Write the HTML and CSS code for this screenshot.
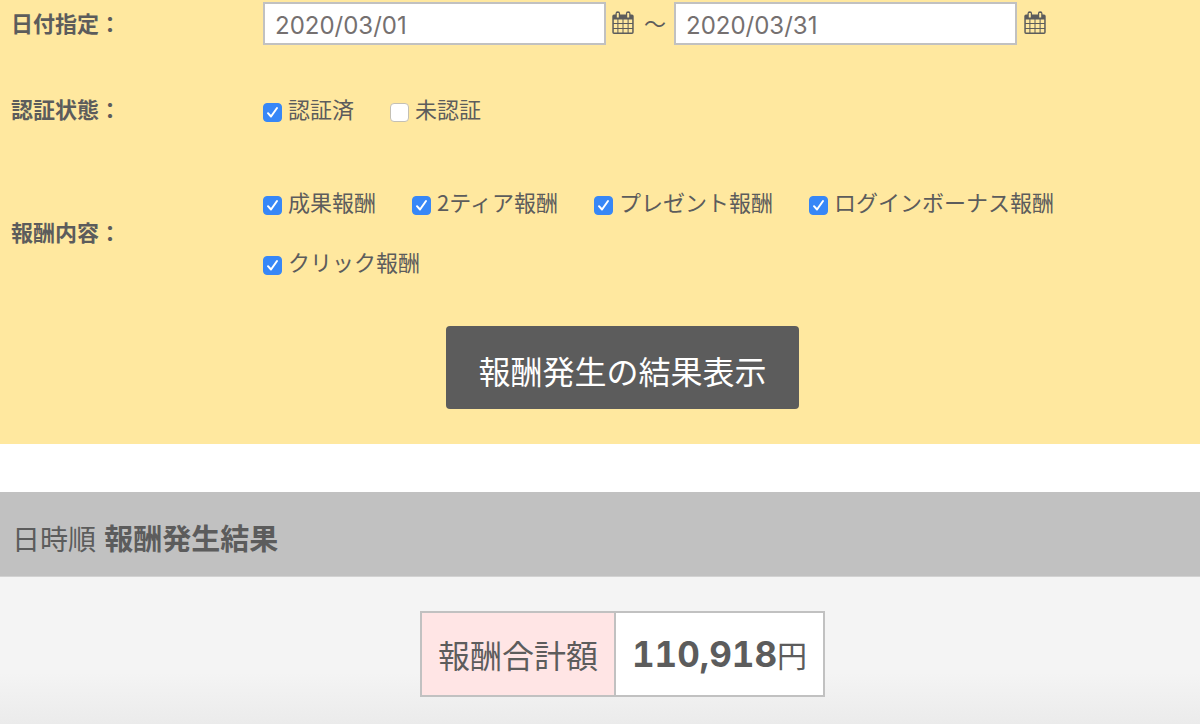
FILE: index.html
```html
<!DOCTYPE html>
<html lang="ja">
<head>
<meta charset="utf-8">
<meta name="viewport" content="width=device-width, initial-scale=1">
<title>報酬発生結果</title>
<link rel="stylesheet" href="styles.css">
</head>
<body>
<svg class="sprite" aria-hidden="true">
  <symbol id="calendar" viewBox="0 0 22 24">
    <path fill-rule="evenodd" d="M2 3.500h1.500V2.500a2.300 2.300 0 0 1 4.600 0v1h5.800v-1a2.300 2.300 0 0 1 4.600 0v1H20a1.700 1.700 0 0 1 1.700 1.700v16a1.700 1.700 0 0 1-1.700 1.700H2A1.700 1.700 0 0 1 .300 21.200v-16A1.700 1.700 0 0 1 2 3.500zM1.800 8.500v3.600h3.600V8.500zM6.400 8.500v3.600h4.100V8.500zM11.500 8.500v3.600h4.100V8.500zM16.600 8.500v3.600h3.600V8.500zM1.800 13.100v3.900h3.600v-3.900zM6.400 13.100v3.900h4.100v-3.900zM11.500 13.100v3.900h4.100v-3.900zM16.600 13.100v3.900h3.600v-3.900zM1.800 18v3.500h3.600V18zM6.400 18v3.500h4.100V18zM11.500 18v3.500h4.100V18zM16.600 18v3.500h3.600V18zM4.800 2v4.400h2V2zM15.200 2v4.400h2V2z"/>
  </symbol>
</svg>
<form class="search">
  <div class="row row-dates">
    <label class="row-label" for="date-from">日付指定：</label>
    <div class="dates">
      <input class="date" id="date-from" type="text" value="2020/03/01">
      <svg class="calendar" aria-hidden="true"><use href="#calendar"/></svg>
      <span class="tilde">〜</span>
      <input class="date" id="date-to" type="text" value="2020/03/31" aria-label="終了日">
      <svg class="calendar calendar-end" aria-hidden="true"><use href="#calendar"/></svg>
    </div>
  </div>
  <div class="row" role="group" aria-labelledby="status-label">
    <span class="row-label" id="status-label">認証状態：</span>
    <div class="options">
      <label class="option"><input class="check" type="checkbox" checked>認証済</label>
      <label class="option"><input class="check" type="checkbox">未認証</label>
    </div>
  </div>
  <div class="row row-types" role="group" aria-labelledby="type-label">
    <span class="row-label" id="type-label">報酬内容：</span>
    <div class="options">
      <label class="option"><input class="check" type="checkbox" checked>成果報酬</label>
      <label class="option"><input class="check" type="checkbox" checked>2ティア報酬</label>
      <label class="option"><input class="check" type="checkbox" checked>プレゼント報酬</label>
      <label class="option"><input class="check" type="checkbox" checked>ログインボーナス報酬</label>
      <label class="option"><input class="check" type="checkbox" checked>クリック報酬</label>
    </div>
  </div>
  <div class="actions"><button class="submit" type="submit">報酬発生の結果表示</button></div>
</form>
<h2 class="heading">日時順 <strong class="heading-main">報酬発生結果</strong></h2>
<section class="result">
  <table class="total">
    <tr><th class="total-name" scope="row">報酬合計額</th><td class="total-value"><strong class="amount">110,918</strong>円</td></tr>
  </table>
</section>
</body>
</html>
```
FILE: styles.css
```css
* {
  box-sizing: border-box;
}

body {
  margin: 0;
  min-height: 100vh;
  display: flex;
  flex-direction: column;
  background: #fff;
  color: #5c5c5c;
  font-family: "Noto Sans CJK JP", sans-serif;
  font-size: 22px;
  line-height: 32px;
}

.sprite {
  position: absolute;
  width: 0;
  height: 0;
}

.search {
  display: flex;
  flex-direction: column;
  gap: 47px;
  padding: 2px 0 35px;
  background: #ffe89f;
}

.row {
  display: grid;
  grid-template-columns: 252px 1fr;
  align-items: center;
  padding: 0 11px;
}

.row-types {
  margin-top: 14px;
}

.row-label {
  font-weight: 700;
}

.row-dates .row-label,
.tilde {
  padding-bottom: 4px;
}

.dates {
  display: flex;
  align-items: center;
}

.date {
  flex: 0 1 343px;
  min-width: 0;
  height: 43px;
  padding: 4px 10px 0;
  border: 2px solid #c1c1c1;
  border-radius: 0;
  background: #fff;
  color: #757070;
  font-family: Inter, sans-serif;
  font-size: 24px;
}

.calendar {
  flex: none;
  width: 22px;
  height: 24px;
  margin: 0 0 2px 6px;
  fill: #5c5c5c;
}

.calendar-end {
  margin-left: 7px;
}

.tilde {
  padding-left: 10px;
  padding-right: 8px;
}

.options {
  display: flex;
  flex-wrap: wrap;
  gap: 28px 36px;
}

.option {
  display: flex;
  align-items: center;
  gap: 6px;
}

.check {
  appearance: none;
  flex: none;
  width: 19px;
  height: 19px;
  margin: 9px 0 0;
  border: 1px solid #c4c0b4;
  border-radius: 4px;
  background: #fff;
}

.check:checked {
  border-color: #3787f7;
  background: #3787f7 url("data:image/svg+xml,%3Csvg xmlns='http://www.w3.org/2000/svg' viewBox='0 0 17 17'%3E%3Cpath d='M4 9.200l3 3.300L13 4' fill='none' stroke='white' stroke-width='2' stroke-linecap='round' stroke-linejoin='round'/%3E%3C/svg%3E") center / 100% no-repeat;
}

.actions {
  display: flex;
  justify-content: center;
  padding: 2px 0 0 45px;
}

.submit {
  padding: 20px 32px 15px;
  border: 0;
  border-radius: 4px;
  background: #5c5c5c;
  color: #fff;
  font-family: inherit;
  font-size: 32px;
  line-height: 48px;
}

.heading {
  margin: 48px 0 0;
  padding: 25px 12px 18px;
  border-bottom: 1px solid #d2d2d2;
  background: #c1c1c1;
  font-size: 28px;
  font-weight: 400;
  line-height: 40px;
}

.heading-main {
  margin-left: 2px;
  font-size: 29px;
}

.result {
  flex: 1;
  display: flex;
  justify-content: center;
  align-items: flex-start;
  padding: 34px 0 28px 45px;
  background: linear-gradient(#f4f4f4 65%, #ebebeb);
}

.total {
  border-collapse: collapse;
  font-size: 32px;
  line-height: 48px;
}

.total-name,
.total-value {
  padding: 17px 16px;
  border: 2px solid #c1c1c1;
  font-weight: 400;
}

.total-name {
  background: #ffe5e5;
}

.total-value {
  background: #fff;
  font-size: 30px;
}

.amount {
  font-family: Inter, sans-serif;
  font-size: 35px;
  font-variant-numeric: tabular-nums;
}
```
